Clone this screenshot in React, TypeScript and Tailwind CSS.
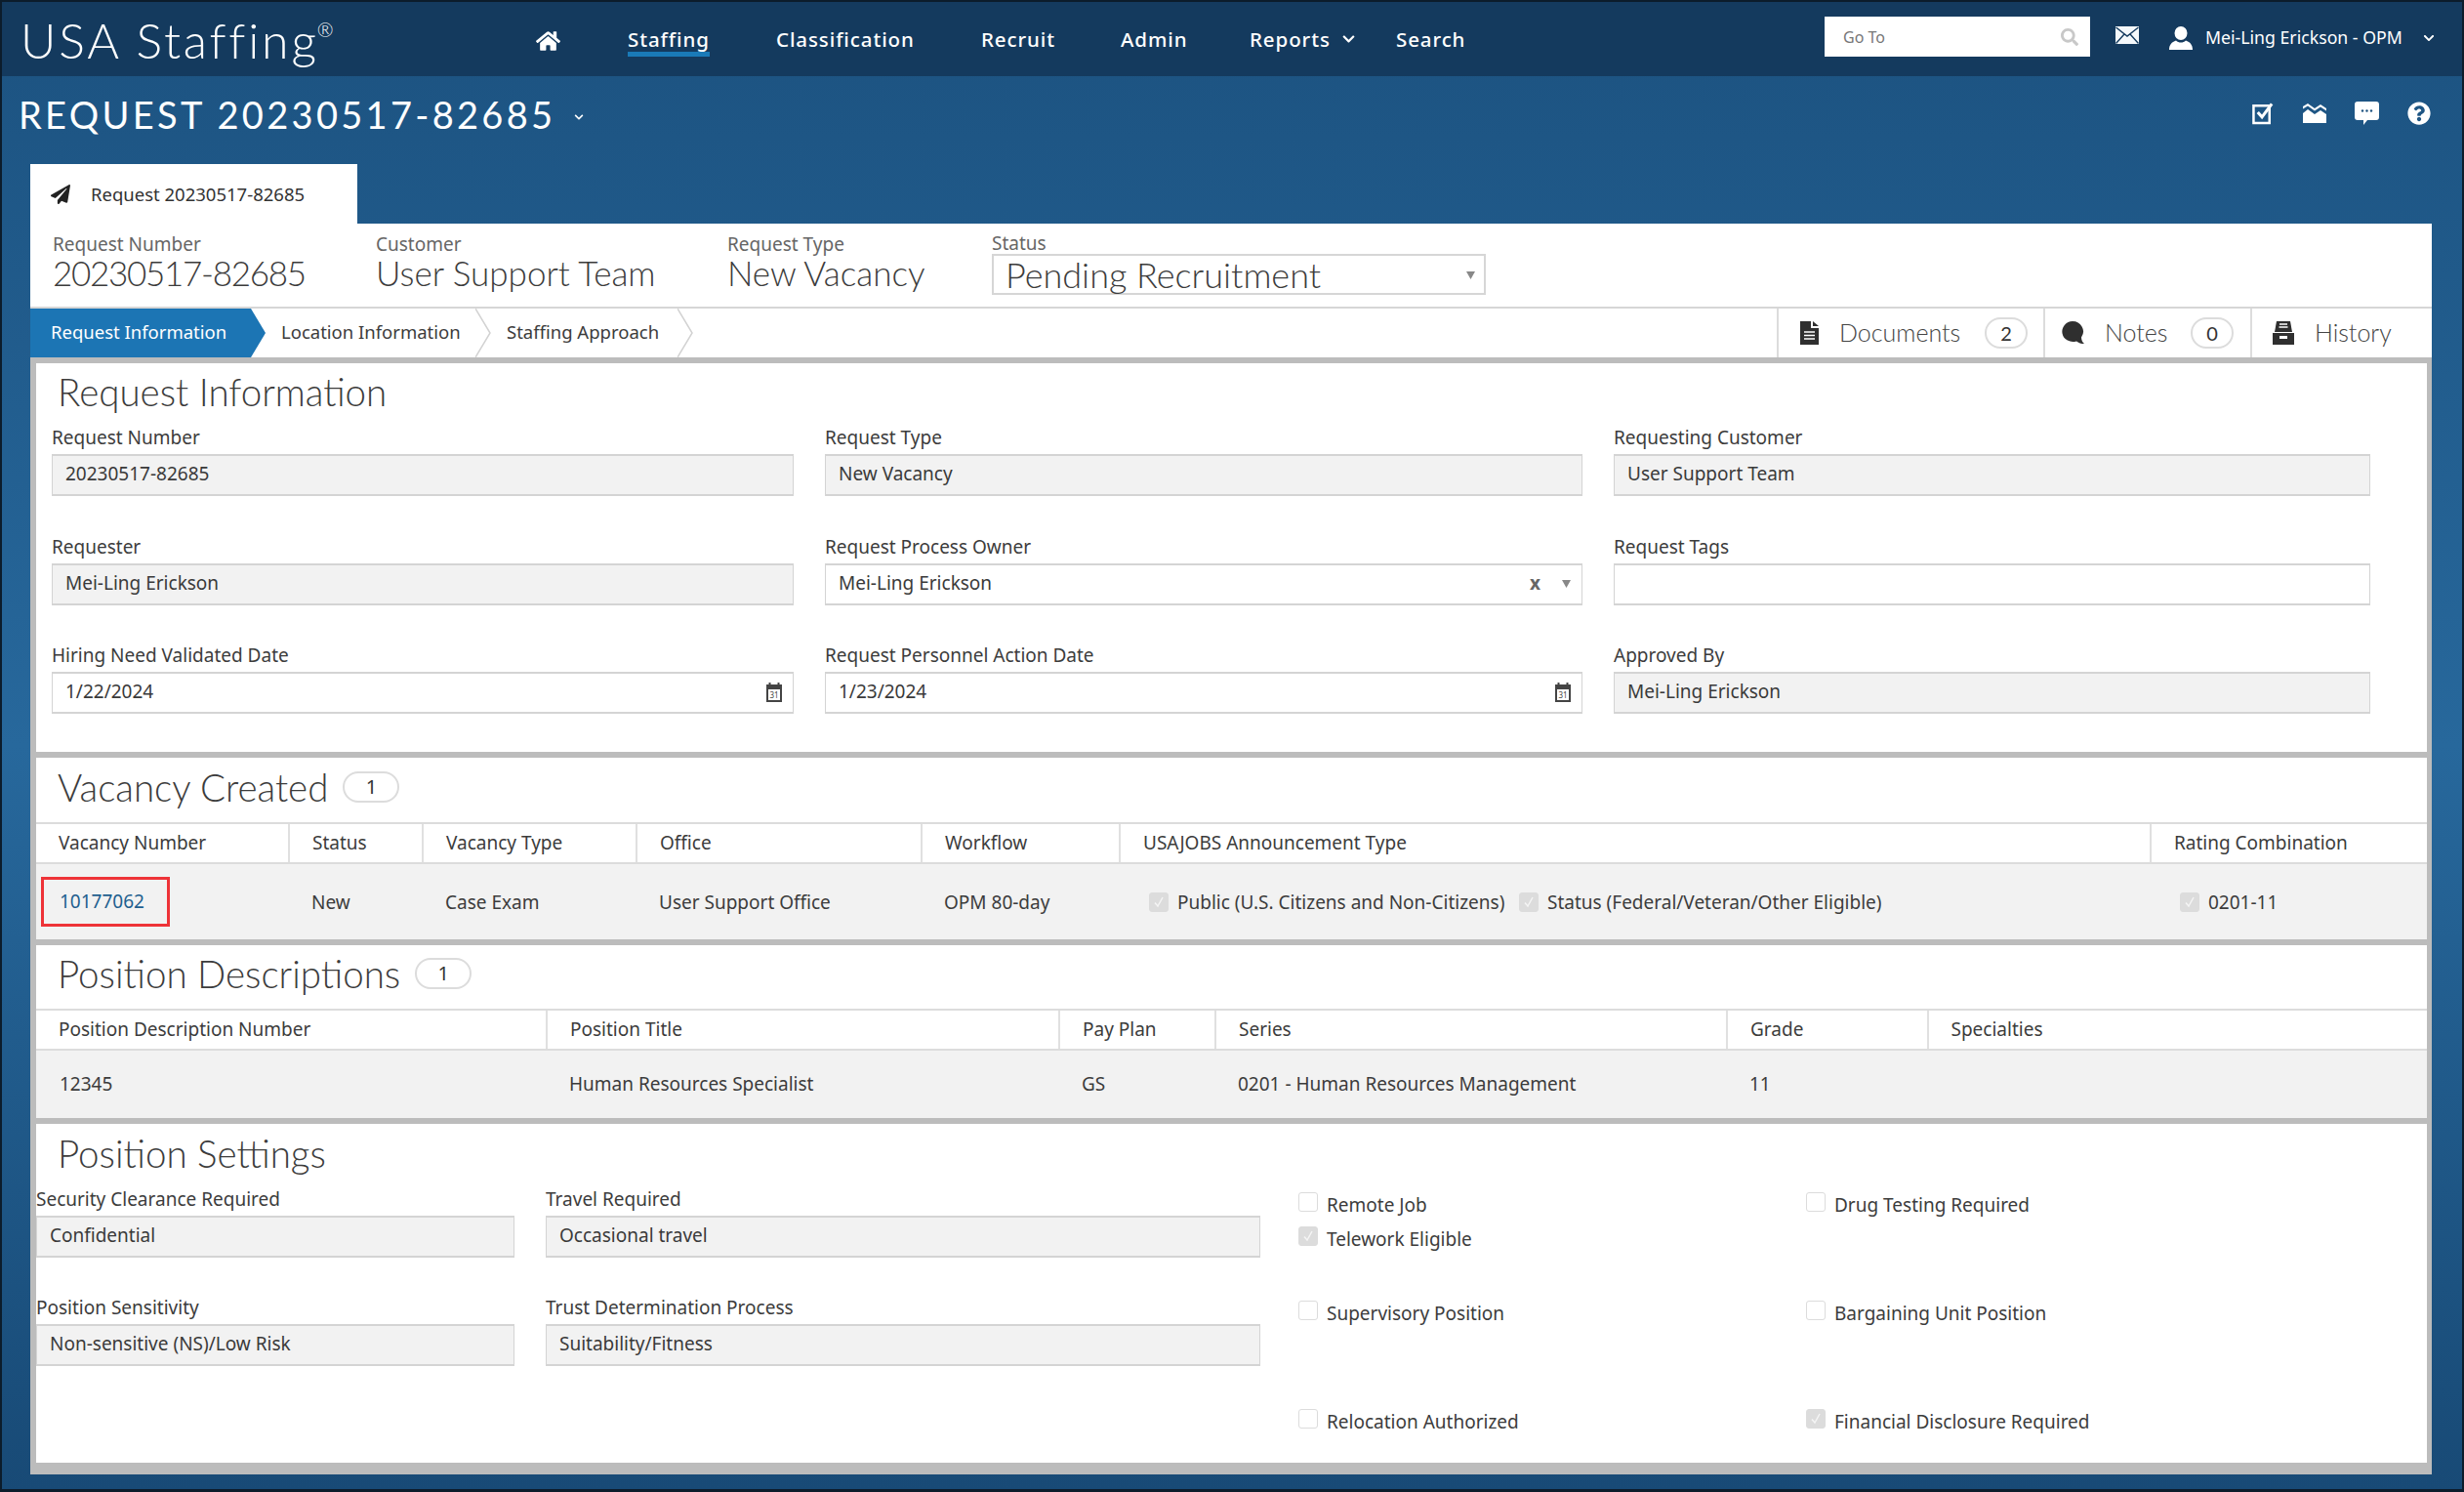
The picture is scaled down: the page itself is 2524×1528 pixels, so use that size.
import type { ReactNode } from "react";
import { FaChevronDown, FaHome, FaPaperPlane, FaQuestionCircle, FaSearch } from "react-icons/fa";

const vacancyCols = "grid-cols-[258px_137px_219px_292px_203px_1056px_1fr]";
const positionCols = "grid-cols-[522px_525px_160px_524px_205.5px_1fr]";
const lightFont = "font-['Lato','Noto_Sans',sans-serif] font-light";

function MailIcon() {
  return (
    <svg viewBox="0 0 24 18" className="h-[18px] w-[24px]">
      <rect width="24" height="18" fill="#f4f8fb" />
      <path d="M0.5 1 12 10 23.5 1M0.5 17.500 9 8M23.5 17.500 15 8" fill="none" stroke="#143a5e" strokeWidth="1.4" />
    </svg>
  );
}

function UserIcon() {
  return (
    <svg viewBox="0 0 24 24" className="h-[24px] w-[24px]" fill="#fff">
      <ellipse cx="12" cy="7" rx="6.500" ry="7" />
      <path d="M0 24c0-5 2.500-8 7-9.500 1.500 1.500 3 2 5 2s3.500-.5 5-2c4.500 1.500 7 4.500 7 9.500z" />
    </svg>
  );
}

function CheckSquareIcon() {
  return (
    <svg viewBox="0 0 24 24" className="h-[24px] w-[23px]">
      <path d="M1.500 4h17v18.500h-17z" fill="none" stroke="#fff" strokeWidth="2.600" />
      <path d="M6 11l4.500 5L21 2" fill="none" stroke="#fff" strokeWidth="3.200" />
    </svg>
  );
}

function TrendIcon() {
  return (
    <svg viewBox="0 0 24 20" className="h-[20px] w-[24px]" fill="#fff">
      <path d="M0 3 5 0l7 5 6-4 6 4v2.400l-6-4-6 4-7-5-5 3z" />
      <path d="M0 10 5 6l7 5 6-4 6 4v9H0z" />
    </svg>
  );
}

function ChatIcon() {
  return (
    <svg viewBox="0 0 25 24" className="h-[24px] w-[25px]">
      <path d="M3 0h19a3 3 0 0 1 3 3v13a3 3 0 0 1-3 3H13l-4 5v-5H3a3 3 0 0 1-3-3V3a3 3 0 0 1 3-3z" fill="#fff" />
      <circle cx="8" cy="9.500" r="1.200" fill="#1c5280" />
      <circle cx="12.500" cy="9.500" r="1.200" fill="#1c5280" />
      <circle cx="17" cy="9.500" r="1.200" fill="#1c5280" />
    </svg>
  );
}

function DocIcon() {
  return (
    <svg viewBox="0 0 19 24" className="h-[24px] w-[19px]">
      <path d="M0 0h11v7h8v17H0z" fill="#2f2f2f" />
      <path d="M13 0l6 5h-6z" fill="#2f2f2f" />
      <path d="M4 11h11M4 14.500h11M4 18h11" stroke="#fff" strokeWidth="1.400" />
    </svg>
  );
}

function NoteIcon() {
  return (
    <svg viewBox="0 0 23 24" className="h-[24px] w-[23px]">
      <path d="M11 0a11 10.500 0 0 1 9 16.500c0 2.500 1.200 5 3 6.500-3 0-6-1-8-2.600A11 10.500 0 1 1 11 0z" fill="#2f2f2f" />
    </svg>
  );
}

function DrawerIcon() {
  return (
    <svg viewBox="0 0 22 24" className="h-[24px] w-[22px]">
      <path d="M4 0h14l2 11H2z" fill="#2f2f2f" />
      <path d="M7 3h8M6.500 6h9" stroke="#fff" strokeWidth="1.300" />
      <path d="M0 12h22v12H0z" fill="#2f2f2f" />
      <rect x="7" y="15" width="8" height="3" fill="#fff" />
    </svg>
  );
}

function CalendarIcon() {
  return (
    <svg viewBox="0 0 20 20" className="h-[20px] w-[20px]">
      <path d="M2 2h16v18H2z" fill="#444" />
      <path d="M5.500 0v4M14.500 0v4" stroke="#444" strokeWidth="2" />
      <rect x="4" y="7" width="12" height="11" fill="#fff" />
      <text x="10" y="16" textAnchor="middle" fontSize="8" fill="#444">
        31
      </text>
    </svg>
  );
}

function Caret({ className }: { className: string }) {
  return (
    <svg viewBox="0 0 10 10" className={className}>
      <path d="M0 1h10L5 10z" fill="#888" />
    </svg>
  );
}

function Chevron() {
  return (
    <svg viewBox="0 0 16 50" className="h-[50px] w-[16px] shrink-0">
      <polyline points="0,0 15,25 0,50" fill="none" stroke="#d2d2d2" strokeWidth="1.500" />
    </svg>
  );
}

function Badge({ value, className }: { value: string; className: string }) {
  return (
    <span className={`flex h-[32px] items-center justify-center rounded-full border-2 border-[#dcdcdc] bg-white text-[20px] font-normal text-[#333] ${className}`}>
      {value}
    </span>
  );
}

function Field({ label, value, disabled, children }: { label: string; value?: string; disabled?: boolean; children?: ReactNode }) {
  return (
    <div>
      <div className="mt-[-1px] h-[23px] text-[19px] leading-[22px] text-[#3c3c3c]">{label}</div>
      <div
        className={`mt-[5px] flex h-[43px] items-center border border-y-2 border-[#d4d4d4] pb-[2px] pl-[13px] text-[19px] text-[#3a3a3a] ${
          disabled ? "bg-[#f2f2f2]" : "bg-white"
        }`}
      >
        <span className="flex-1">{value}</span>
        {children}
      </div>
    </div>
  );
}

function CheckBox({ checked }: { checked?: boolean }) {
  return (
    <span className={`flex h-[20px] w-[20px] shrink-0 items-center justify-center rounded-[3px] border border-[#dcdcdc] ${checked ? "bg-[#dcdcdc]" : "bg-white"}`}>
      {checked && (
        <svg viewBox="0 0 14 14" className="h-[14px] w-[14px]">
          <path d="M3 7.500l3 3.500 5-9" fill="none" stroke="#f5f5f5" strokeWidth="1.500" />
        </svg>
      )}
    </span>
  );
}

function Check({ label, checked }: { label: string; checked?: boolean }) {
  return (
    <div className="flex h-[35px] items-start gap-[9px]">
      <span className="mt-[3px]">
        <CheckBox checked={checked} />
      </span>
      <span className="mt-[5px] text-[19px] leading-[22px] text-[#3c3c3c]">{label}</span>
    </div>
  );
}

function HeadCell({ label }: { label: string }) {
  return <div className="flex items-center border-l-2 border-[#e0e0e0] pl-[23px] first:border-l-0">{label}</div>;
}

function SectionTitle({ title, count }: { title: string; count?: string }) {
  return (
    <div className="flex items-center gap-[15px] pl-[22px]">
      <h2 className={`text-[38.500px] leading-[46px] text-[#3c3c3c] ${lightFont}`}>{title}</h2>
      {count && <Badge value={count} className="w-[58px]" />}
    </div>
  );
}

function NavLink({ label, active, className }: { label: string; active?: boolean; className: string }) {
  return (
    <div className={`h-[35px] shrink-0 ${className}`}>
      <a className={`inline-block h-[35px] text-[20.500px] font-medium leading-[35px] tracking-[0.9px] ${active ? "border-b-[5px] border-[#1a7ab8]" : ""}`}>{label}</a>
    </div>
  );
}

export default function App() {
  return (
    <div className="h-[1528px] w-[2524px] overflow-hidden border-x-2 border-t-2 border-b-[3px] border-[#0c1c2b] bg-linear-to-b from-[#1c5280] via-[#27689c] to-[#184a76] font-['Noto_Sans',sans-serif]">
      {/* top nav */}
      <header className="flex h-[76px] items-center bg-[#143a5e] pr-[26px] text-white">
        <div className={`ml-[19px] mt-[2px] w-[336px] text-[50px] leading-none tracking-[2.800px] ${lightFont}`}>
          USA Staffing<sup className="top-[-22px] ml-[-2px] text-[20px] tracking-normal">®</sup>
        </div>
        <FaHome className="ml-[192px] mr-[69px] mt-[3px] h-[24px] w-[25px] shrink-0" />
        <NavLink label="Staffing" active className="w-[152px]" />
        <NavLink label="Classification" className="w-[210px]" />
        <NavLink label="Recruit" className="w-[143px]" />
        <NavLink label="Admin" className="w-[132px]" />
        <NavLink label="Reports" className="w-[93px]" />
        <FaChevronDown className="h-[14px] w-[17px] shrink-0" />
        <NavLink label="Search" className="ml-[40px] w-[80px]" />
        <div className="ml-auto mt-[-5px] flex h-[41px] w-[272px] items-center bg-white pl-[19px] pr-[12px] text-[16px] text-[#777]">
          <span className="flex-1">Go To</span>
          <FaSearch className="h-[18px] w-[18px] text-[#c8c8c8]" />
        </div>
        <span className="ml-[26px] mt-[-8px]">
          <MailIcon />
        </span>
        <span className="ml-[31px] mt-[-3px]">
          <UserIcon />
        </span>
        <span className="ml-[13px] mt-[-4px] w-[204px] whitespace-nowrap text-[17.700px]">Mei-Ling Erickson - OPM</span>
        <FaChevronDown className="ml-[17px] mt-[-3px] h-[12px] w-[16px]" />
      </header>

      {/* page title */}
      <div className="flex h-[90px] items-start text-white">
        <h1 className={`ml-[17px] mt-[16px] text-[38px] font-normal! leading-[46px] tracking-[3.300px] ${lightFont}`}>REQUEST 20230517-82685</h1>
        <FaChevronDown className="ml-[17px] mt-[37px] h-[10px] w-[14px]" />
        <div className="ml-auto mr-[32px] mt-[26px] flex items-center gap-[29px]">
          <CheckSquareIcon />
          <TrendIcon />
          <ChatIcon />
          <FaQuestionCircle className="h-[24px] w-[24px]" />
        </div>
      </div>

      <main className="ml-[29px] w-[2460px]">
        <div className="flex h-[61px] w-[335px] items-center gap-[21px] bg-white pl-[21px] text-[18.500px] text-[#333]">
          <FaPaperPlane className="h-[20px] w-[20px] text-[#222]" />
          Request 20230517-82685
        </div>

        {/* request summary */}
        <div className="grid h-[87px] grid-cols-[331px_360px_271px_506px] border-b-2 border-[#d6d6d6] bg-white pl-[23px] pt-[10px] text-[#3c3c3c]">
          <div>
            <div className="text-[19px] leading-[22px] text-[#666]">Request Number</div>
            <div className={`text-[35px] leading-[36px] tracking-[-1.300px] ${lightFont}`}>20230517-82685</div>
          </div>
          <div>
            <div className="text-[19px] leading-[22px] text-[#666]">Customer</div>
            <div className={`text-[35px] leading-[36px] ${lightFont}`}>User Support Team</div>
          </div>
          <div>
            <div className="text-[19px] leading-[22px] text-[#666]">Request Type</div>
            <div className={`text-[35px] leading-[36px] ${lightFont}`}>New Vacancy</div>
          </div>
          <div>
            <div className="h-[21px] text-[19px] leading-[21px] text-[#666]">Status</div>
            <div className={`flex h-[42px] items-center border-2 border-[#d6d6d6] pl-[12px] pr-[9px] text-[36px] leading-[36px] ${lightFont}`}>
              <span className="flex-1">Pending Recruitment</span>
              <Caret className="h-[9px] w-[9px]" />
            </div>
          </div>
        </div>

        {/* steps and side tabs */}
        <div className="flex h-[50px] items-center bg-white text-[18.500px] text-[#3c3c3c]">
          <div className="flex h-[50px] w-[241px] items-center bg-[#1c75b4] pb-[2px] pl-[21px] text-white [clip-path:polygon(0_0,226px_0,241px_50%,226px_100%,0_100%)]">
            Request Information
          </div>
          <span className="w-[215px] pb-[2px] pl-[16px]">Location Information</span>
          <Chevron />
          <span className="w-[191px] pb-[2px] pl-[16px]">Staffing Approach</span>
          <Chevron />
          <div className={`ml-auto flex h-[50px] text-[25px] text-[#444] ${lightFont}`}>
            <div className="flex w-[273px] items-center border-l-2 border-[#dcdcdc] pl-[22px]">
              <DocIcon />
              <span className="ml-[21px] w-[149px]">Documents</span>
              <Badge value="2" className="w-[44px]" />
            </div>
            <div className="flex w-[212px] items-center border-l-2 border-[#dcdcdc] pl-[17px]">
              <NoteIcon />
              <span className="ml-[21px] w-[88px]">Notes</span>
              <Badge value="0" className="w-[44px]" />
            </div>
            <div className="flex w-[186px] items-center border-l-2 border-[#dcdcdc] pl-[21px]">
              <DrawerIcon />
              <span className="ml-[21px]">History</span>
            </div>
          </div>
        </div>

        {/* sections */}
        <div className="flex flex-col gap-[6px] bg-[#bcbcbc] pb-[12px] pl-[6px] pr-[5px] pt-[6px]">
          <section className="h-[398px] bg-white pt-[6px]">
            <SectionTitle title="Request Information" />
            <div className="mt-[14px] grid grid-cols-[760px_776px_775px] gap-x-[32px] gap-y-[41.500px] pl-[16px]">
              <Field label="Request Number" value="20230517-82685" disabled />
              <Field label="Request Type" value="New Vacancy" disabled />
              <Field label="Requesting Customer" value="User Support Team" disabled />
              <Field label="Requester" value="Mei-Ling Erickson" disabled />
              <Field label="Request Process Owner" value="Mei-Ling Erickson">
                <span className="mr-[22px] text-[19px] font-bold leading-none text-[#666]">x</span>
                <Caret className="mr-[11px] h-[9px] w-[9px]" />
              </Field>
              <Field label="Request Tags" />
              <Field label="Hiring Need Validated Date" value="1/22/2024">
                <span className="mr-[9px]">
                  <CalendarIcon />
                </span>
              </Field>
              <Field label="Request Personnel Action Date" value="1/23/2024">
                <span className="mr-[9px]">
                  <CalendarIcon />
                </span>
              </Field>
              <Field label="Approved By" value="Mei-Ling Erickson" disabled />
            </div>
          </section>

          <section className="h-[186px] bg-white">
            <div className="flex h-[66px] items-center pb-[6px]">
              <SectionTitle title="Vacancy Created" count="1" />
            </div>
            <div className={`grid h-[43px] ${vacancyCols} border-y-2 border-[#dcdcdc] text-[19px] text-[#3c3c3c]`}>
              <HeadCell label="Vacancy Number" />
              <HeadCell label="Status" />
              <HeadCell label="Vacancy Type" />
              <HeadCell label="Office" />
              <HeadCell label="Workflow" />
              <HeadCell label="USAJOBS Announcement Type" />
              <HeadCell label="Rating Combination" />
            </div>
            <div className={`grid h-[77px] ${vacancyCols} items-center bg-[#f2f2f2] text-[19px] text-[#3c3c3c]`}>
              <div className="ml-[5px] flex h-[51px] w-[132px] items-center border-[3px] border-[#ee3338] pl-[16px] text-[#1f5f8f]">10177062</div>
              <div className="pl-[24px] pt-[2px]">New</div>
              <div className="pl-[24px] pt-[2px]">Case Exam</div>
              <div className="pl-[24px] pt-[2px]">User Support Office</div>
              <div className="pl-[24px] pt-[2px]">OPM 80-day</div>
              <div className="flex items-center pl-[31px]">
                <CheckBox checked />
                <span className="ml-[9px] w-[340px] whitespace-nowrap pt-[2px]">Public (U.S. Citizens and Non-Citizens)</span>
                <span className="ml-[10px]">
                  <CheckBox checked />
                </span>
                <span className="ml-[9px] pt-[2px]">Status (Federal/Veteran/Other Eligible)</span>
              </div>
              <div className="flex items-center pl-[31px]">
                <CheckBox checked />
                <span className="ml-[9px] pt-[2px]">0201-11</span>
              </div>
            </div>
          </section>

          <section className="h-[177px] bg-white">
            <div className="flex h-[65px] items-center pb-[8px]">
              <SectionTitle title="Position Descriptions" count="1" />
            </div>
            <div className={`grid h-[43px] ${positionCols} border-y-2 border-[#dcdcdc] text-[19px] text-[#3c3c3c]`}>
              <HeadCell label="Position Description Number" />
              <HeadCell label="Position Title" />
              <HeadCell label="Pay Plan" />
              <HeadCell label="Series" />
              <HeadCell label="Grade" />
              <HeadCell label="Specialties" />
            </div>
            <div className={`grid h-[69px] ${positionCols} items-center bg-[#f2f2f2] text-[19px] text-[#3c3c3c]`}>
              <div className="pl-[24px]">12345</div>
              <div className="pl-[24px]">Human Resources Specialist</div>
              <div className="pl-[24px]">GS</div>
              <div className="pl-[24px]">0201 - Human Resources Management</div>
              <div className="pl-[24px]">11</div>
              <div />
            </div>
          </section>

          <section className="h-[347px] bg-white">
            <div className="flex h-[67px] items-center pb-[8px]">
              <SectionTitle title="Position Settings" />
            </div>
            <div className="grid grid-cols-[490px_732px_520px_1fr] grid-rows-[70px_70px_70px] gap-y-[41px]">
              <Field label="Security Clearance Required" value="Confidential" disabled />
              <div className="ml-[32px] w-[732px]">
                <Field label="Travel Required" value="Occasional travel" disabled />
              </div>
              <div className="ml-[71px]">
                <Check label="Remote Job" />
                <Check label="Telework Eligible" checked />
              </div>
              <div className="ml-[71px]">
                <Check label="Drug Testing Required" />
              </div>
              <Field label="Position Sensitivity" value="Non-sensitive (NS)/Low Risk" disabled />
              <div className="ml-[32px] w-[732px]">
                <Field label="Trust Determination Process" value="Suitability/Fitness" disabled />
              </div>
              <div className="ml-[71px]">
                <Check label="Supervisory Position" />
              </div>
              <div className="ml-[71px]">
                <Check label="Bargaining Unit Position" />
              </div>
              <div />
              <div />
              <div className="ml-[71px]">
                <Check label="Relocation Authorized" />
              </div>
              <div className="ml-[71px]">
                <Check label="Financial Disclosure Required" checked />
              </div>
            </div>
          </section>
        </div>
      </main>
    </div>
  );
}
